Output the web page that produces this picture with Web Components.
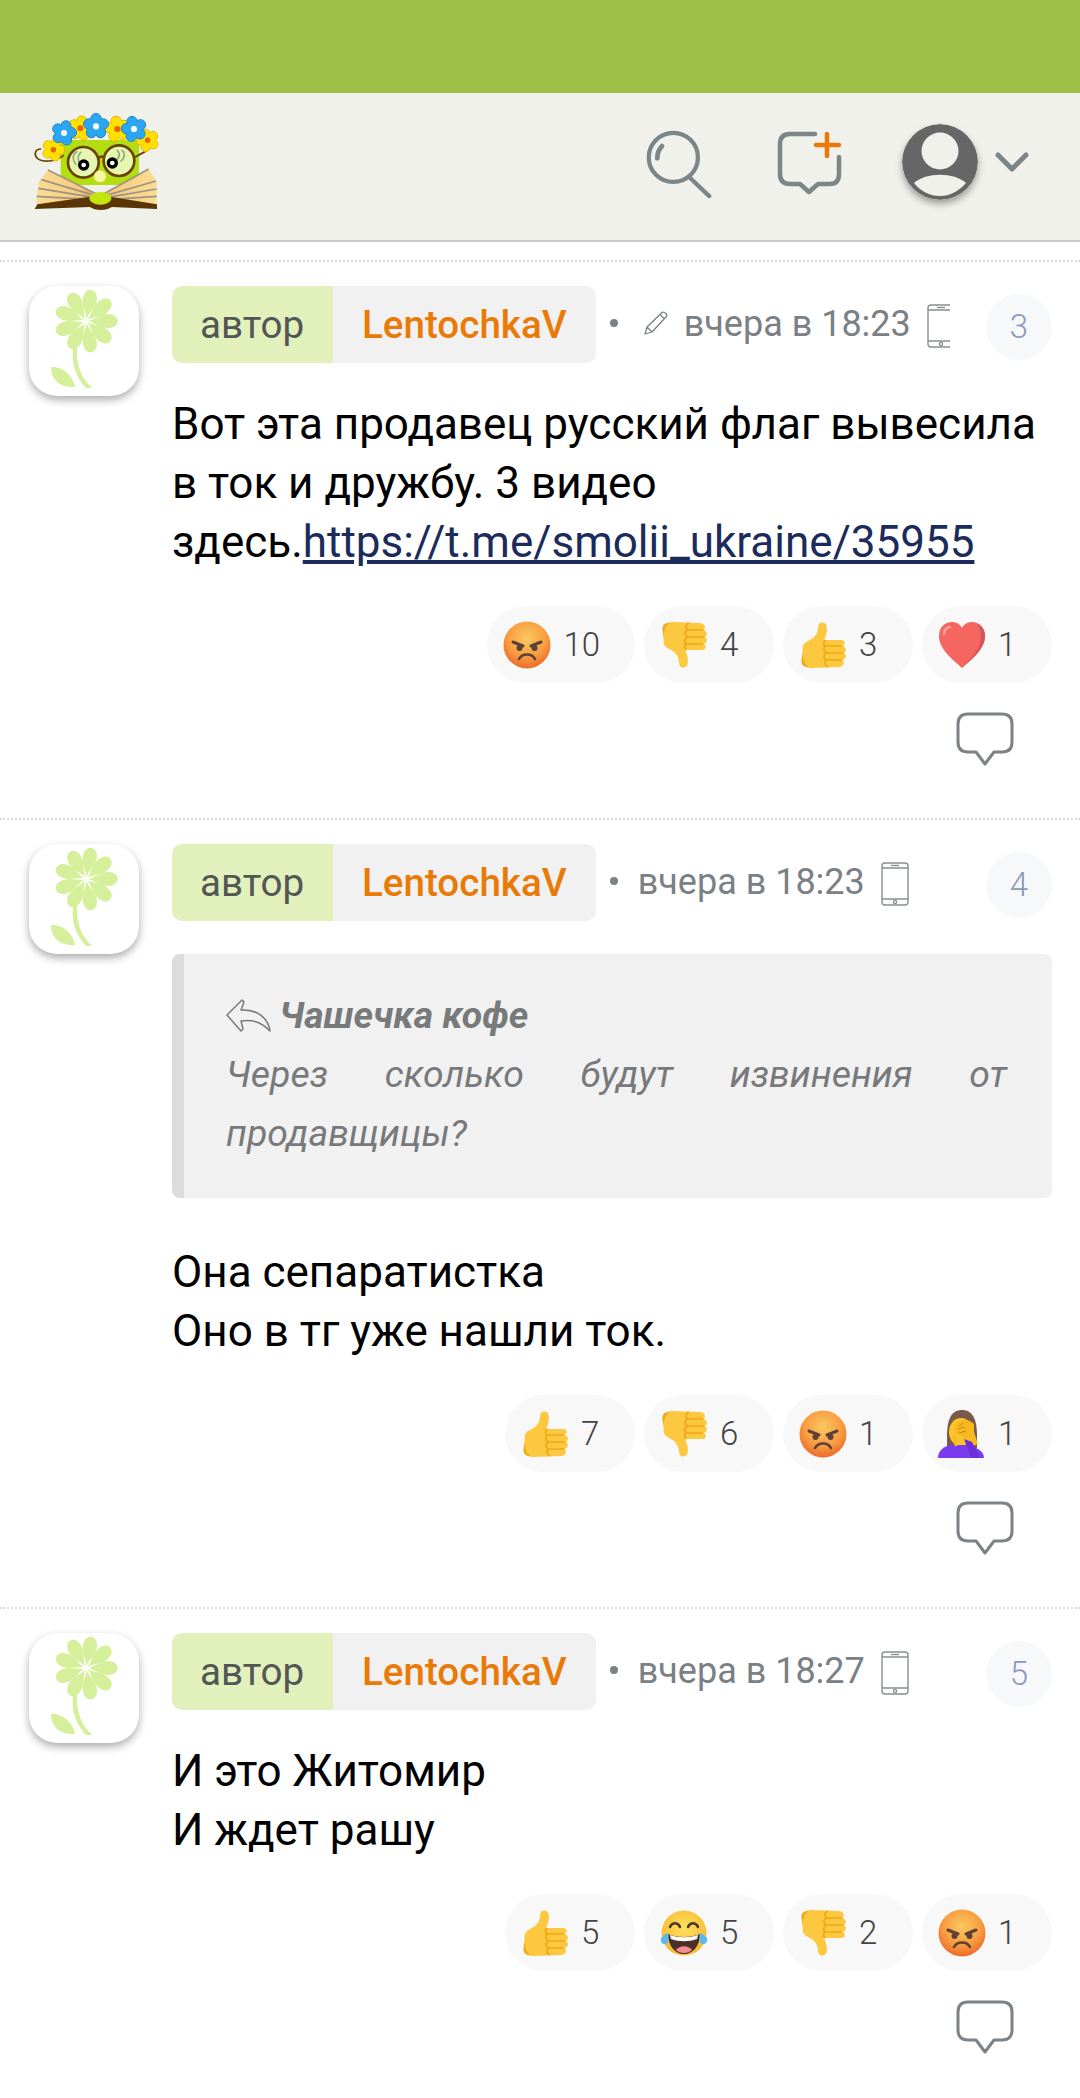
<!DOCTYPE html>
<html lang="ru">
<head>
<meta charset="utf-8">
<title>Forum</title>
<style>
html, body { margin: 0; padding: 0; background: #fff; }
body { font-family: Roboto, "Noto Sans", sans-serif; color: #000; }
a { color: #1b2b5c; text-decoration: underline; }
</style>
</head>
<body>
<top-strip></top-strip>
<site-header></site-header>
<div style="height: 18px"></div>

<forum-comment number="3" time="вчера в 18:23" edited clipped>
  <comment-text>Вот эта продавец русский флаг вывесила в ток и дружбу. 3 видео<br>здесь.<a href="#">https://t.me/smolii_ukraine/35955</a></comment-text>
  <reaction-row slot="reactions">
    <reaction-pill emoji="angry" count="10"></reaction-pill>
    <reaction-pill emoji="down" count="4"></reaction-pill>
    <reaction-pill emoji="up" count="3"></reaction-pill>
    <reaction-pill emoji="heart" count="1"></reaction-pill>
  </reaction-row>
</forum-comment>

<forum-comment number="4" time="вчера в 18:23">
  <quote-block author="Чашечка кофе">Через сколько будут извинения от продавщицы?</quote-block>
  <comment-text style="margin-top: 45px">Она сепаратистка<br>Оно в тг уже нашли ток.</comment-text>
  <reaction-row slot="reactions">
    <reaction-pill emoji="up" count="7"></reaction-pill>
    <reaction-pill emoji="down" count="6"></reaction-pill>
    <reaction-pill emoji="angry" count="1"></reaction-pill>
    <reaction-pill emoji="facepalm" count="1"></reaction-pill>
  </reaction-row>
</forum-comment>

<forum-comment number="5" time="вчера в 18:27">
  <comment-text>И это Житомир<br>И ждет рашу</comment-text>
  <reaction-row slot="reactions">
    <reaction-pill emoji="up" count="5"></reaction-pill>
    <reaction-pill emoji="joy" count="5"></reaction-pill>
    <reaction-pill emoji="down" count="2"></reaction-pill>
    <reaction-pill emoji="angry" count="1"></reaction-pill>
  </reaction-row>
</forum-comment>

<script>
function flower (cx, cy, r, fill, edge, mid, rot) {
  let out = ''
  for (let i = 0; i < 5; i++) {
    const a = (rot + i * 72) * Math.PI / 180
    out += `<circle cx="${cx + Math.sin(a) * r * 0.62}" cy="${cy - Math.cos(a) * r * 0.62}" r="${r * 0.42}" fill="${fill}" stroke="${edge}" stroke-width="3"/>`
  }
  for (let i = 0; i < 5; i++) {
    const a = (rot + i * 72) * Math.PI / 180
    out += `<circle cx="${cx + Math.sin(a) * r * 0.62}" cy="${cy - Math.cos(a) * r * 0.62}" r="${r * 0.38}" fill="${fill}"/>`
  }
  out += `<circle cx="${cx}" cy="${cy}" r="${r * 0.4}" fill="${fill}"/><circle cx="${cx}" cy="${cy}" r="${r * 0.25}" fill="${mid}"/>`
  return out
}

const logoSvg = `
<svg width="150" height="115" viewBox="0 0 450 345">
  <defs>
    <linearGradient id="pg" x1="0" x2="1"><stop offset="0" stop-color="#fbdc92"/><stop offset=".36" stop-color="#f8cb7c"/><stop offset=".5" stop-color="#f59a3c"/><stop offset=".64" stop-color="#f8cb7c"/><stop offset="1" stop-color="#fbdc92"/></linearGradient>
  </defs>
  <path d="M122 105 H358 L356 240 H122 Z" fill="#b4de12"/>
  <path d="M130 152 C105 172 68 172 52 160 C40 148 46 132 62 132" fill="none" stroke="#6a4304" stroke-width="5" stroke-linecap="round"/>
  <path d="M338 160 L375 140" stroke="#6a4304" stroke-width="6"/>
  <circle cx="190" cy="172" r="46" fill="#e6f6ae" stroke="#6a4304" stroke-width="8"/>
  <circle cx="297" cy="167" r="46" fill="#e6f6ae" stroke="#6a4304" stroke-width="8"/>
  <path d="M236 160 Q244 150 252 158" fill="none" stroke="#6a4304" stroke-width="7"/>
  <path d="M168 178 C154 160 160 146 170 140 M180 176 C170 160 174 150 182 142 M290 165 C302 152 298 142 292 136 M303 168 C318 154 314 142 306 136" fill="none" stroke="#93a77e" stroke-width="5" stroke-linecap="round"/>
  <circle cx="191" cy="180" r="17" fill="#000"/><circle cx="191" cy="180" r="7" fill="#fff"/>
  <circle cx="277" cy="174" r="17" fill="#000"/><circle cx="277" cy="174" r="7" fill="#fff"/>
  <circle cx="240" cy="214" r="18" fill="#f8f6a2"/>
  <path d="M48 296 L56 232 L84 195 C130 222 190 245 240 270 C290 245 345 222 386 192 L410 230 L410 296 Z" fill="url(#pg)"/>
  <path d="M84 195 L228 266 M64 224 L226 272 M55 250 L224 278 M50 274 L220 284 M386 192 L252 266 M408 228 L256 272 M410 252 L258 278 M410 274 L262 284" stroke="#9a9489" stroke-width="5" fill="none"/>
  <path d="M44 312 L52 298 L205 276 H275 L411 298 V312 L275 306 C260 318 225 318 210 306 Z" fill="#5a3605"/>
  <ellipse cx="241" cy="280" rx="33" ry="19" fill="#c2e60c"/>
  ${flower(100, 134, 33, '#ffe000', '#e2ad00', '#f06000', 20)}
  ${flower(383, 106, 33, '#ffe000', '#e2ad00', '#f06000', -20)}
  ${flower(181, 70, 36, '#ffe000', '#e2ad00', '#f06000', 10)}
  ${flower(292, 72, 37, '#ffe000', '#e2ad00', '#f06000', -10)}
  ${flower(132, 84, 36, '#2ba7f2', '#1a7ec4', '#fff', 15)}
  ${flower(228, 64, 37, '#2ba7f2', '#1a7ec4', '#fff', 0)}
  ${flower(342, 72, 37, '#2ba7f2', '#1a7ec4', '#fff', -15)}
</svg>`

class TopStrip extends HTMLElement {
  constructor () {
    super()
    this.attachShadow({ mode: 'open' })
    this.shadowRoot.innerHTML = '<style>:host { display: block; height: 93px; background: #9fc047; }</style>'
  }
}

class SiteHeader extends HTMLElement {
  constructor () {
    super()
    this.attachShadow({ mode: 'open' })
    this.shadowRoot.innerHTML = `
<style>
:host { display: flex; align-items: flex-start; height: 147px; background: #f0f1ea; border-bottom: 2px solid #cbcbc7; padding-left: 20px; box-sizing: content-box; }
.logo { margin-top: 12px; display: block; }
.tools { margin-left: auto; display: flex; align-items: flex-start; padding-right: 51px; }
svg { display: block; }
.search { margin-top: 37px; }
.chat { margin-top: 38px; margin-left: 64px; }
.face { margin-top: 31px; margin-left: 59px; width: 76px; height: 76px; border-radius: 50%; box-shadow: 0 4px 7px rgba(0,0,0,.35); }
.chev { margin-top: 58px; margin-left: 17px; }
</style>
<div class="logo">${logoSvg}</div>
<div class="tools">
  <svg class="search" width="68" height="68" viewBox="0 0 72 72" fill="none" stroke="#7c8588" stroke-width="4.5" stroke-linecap="round">
    <circle cx="30" cy="29" r="26"/><path d="M47 50 L68 70"/><path d="M13 30 C13 24 15 20 18 17" stroke-width="5"/>
  </svg>
  <svg class="chat" width="66" height="66" viewBox="0 0 66 66" fill="none" stroke="#7c8588" stroke-width="4.5" stroke-linecap="round" stroke-linejoin="round">
    <path d="M38 3 H13 Q3 3 3 13 V43 Q3 53 13 53 H23 L32 61 L41 53 H53 Q62 53 62 43 V26"/>
    <path d="M50 3 V25 M39 14 H62" stroke="#ea7a08"/>
  </svg>
  <svg class="face" width="76" height="76" viewBox="0 0 76 76">
    <circle cx="38" cy="38" r="38" fill="#666"/>
    <circle cx="38" cy="27" r="18.5" fill="#f0f1ea"/>
    <path d="M12 59 C24 48 52 48 64 59 C55 69 46 72 38 72 C30 72 20 69 12 59 Z" fill="#f0f1ea"/>
  </svg>
  <svg class="chev" width="34" height="22" viewBox="0 0 34 22" fill="none" stroke="#7c8588" stroke-width="5" stroke-linecap="round" stroke-linejoin="round">
    <path d="M3 4 L17 18 L31 4"/>
  </svg>
</div>`
  }
}

const phoneTemplate = `
<svg width="28" height="44" viewBox="0 0 28 44" fill="none" stroke="#8b8f92" stroke-width="1.4">
  <rect x="1" y="1" width="26" height="42" rx="3"/><path d="M1 6 H27 M1 37 H27"/><path d="M10 3.5 H18"/><circle cx="14" cy="40" r="1.6"/>
</svg>`

class ForumComment extends HTMLElement {
  constructor () {
    super()
    this.attachShadow({ mode: 'open' })
    const edited = this.hasAttribute('edited')
    const clipped = this.hasAttribute('clipped')
    this.shadowRoot.innerHTML = `
<style>
:host { display: grid; grid-template-columns: 110px 1fr; column-gap: 33px; padding: 24px 28px 52px 29px; border-top: 2px dotted #dcdcdc; box-sizing: border-box; align-content: start; }
.avatar { width: 110px; height: 110px; border-radius: 28px; background: #fff; box-shadow: 0 4px 8px rgba(0,0,0,.32); }
.avatar svg { display: block; }
.body { min-width: 0; }
.meta { display: flex; align-items: flex-start; height: 77px; }
.badge { display: flex; height: 77px; border-radius: 10px; overflow: hidden; font-size: 38.6px; line-height: 77px; }
.role { background: #e2f0bc; color: #525654; padding: 0 32px 0 28px; width: 101px; text-align: center; }
.name { background: #f1f1f1; color: #ea7a08; font-weight: 500; padding: 0 29px; }
.dot { width: 8px; height: 8px; border-radius: 50%; background: #7a8285; margin: 33px 0 0 14px; }
.pencil { margin: 25px 0 0 26px; }
.time { font-size: 36px; color: #7a8084; line-height: 77px; margin-left: 20px; white-space: nowrap; }
.pencil + .time { margin-left: 16px; }
.phone { margin: 18px 0 0 16px; overflow: hidden; width: ${clipped ? 23 : 28}px; height: 44px; }
.num { width: 66px; height: 66px; border-radius: 50%; background: #f7f8fa; color: #8a9ab8; font-size: 33px; font-weight: 300; line-height: 66px; text-align: center; margin: 8px 0 0 auto; flex: none; }
.actions { display: flex; justify-content: flex-end; padding: 29px 38px 0 0; }
.actions svg { display: block; }
</style>
<div class="avatar">
  <svg width="110" height="110" viewBox="0 0 110 110" fill="#d6ef9a">
    <g transform="translate(57 35)">
      ${[0, 40, 80, 120, 160, 200, 240, 280, 320].map(a => `<path transform="rotate(${a + 10})" d="M0 -2 C-1 -8 -7 -14 -7 -22 C-7 -35 7 -35 7 -22 C7 -14 1 -8 0 -2Z"/>`).join('')}
    </g>
    <path d="M44 62 C42 80 48 92 57 102 H63 C52 92 47 78 48 62 Z"/>
    <path d="M22 81 C34 80 44 90 46 101 C32 102 22 95 22 81Z"/>
  </svg>
</div>
<div class="body">
  <div class="meta">
    <div class="badge"><div class="role">автор</div><div class="name">LentochkaV</div></div>
    <div class="dot"></div>
    ${edited ? `<svg class="pencil" width="24" height="24" viewBox="0 0 24 24" fill="none" stroke="#7a8084" stroke-width="1.3" stroke-linejoin="round"><path d="M1 23 L3 16 L18 1.5 Q20 0.5 22 2.5 Q23.5 4.5 22 6 L8 21 Z M3 16 L8 21 M16 3.5 L20.5 8"/></svg>` : ''}
    <div class="time">${this.getAttribute('time')}</div>
    <div class="phone">${phoneTemplate}</div>
    <div class="num">${this.getAttribute('number')}</div>
  </div>
  <slot></slot>
  <slot name="reactions"></slot>
  <div class="actions">
    <svg width="58" height="54" viewBox="0 0 58 54" fill="none" stroke="#7c8285" stroke-width="3" stroke-linejoin="round">
      <path d="M12 2 H46 Q56 2 56 12 V30 Q56 40 46 40 H38 L29 52 L20 40 H12 Q2 40 2 30 V12 Q2 2 12 2 Z"/>
    </svg>
  </div>
</div>`
  }
}

class CommentText extends HTMLElement {
  constructor () {
    super()
    this.attachShadow({ mode: 'open' })
    this.shadowRoot.innerHTML = `
<style>:host { display: block; font-size: 44px; line-height: 59px; color: #000; margin-top: 32px; }</style>
<slot></slot>`
  }
}

class QuoteBlock extends HTMLElement {
  constructor () {
    super()
    this.attachShadow({ mode: 'open' })
    this.shadowRoot.innerHTML = `
<style>
:host { display: block; margin-top: 33px; background: #f1f1f1; border-left: 12px solid #dcdcdc; border-radius: 8px; padding: 32px 45px 35px 42px; font-size: 37.4px; line-height: 59px; font-style: italic; color: #77797b; }
.head { display: flex; align-items: center; gap: 8px; }
b { font-weight: 700; }
svg { display: block; flex: none; }
.txt { text-align: justify; }
</style>
<div class="head">
  <svg width="45" height="33" viewBox="0 0 45 33" fill="none" stroke="#77797b" stroke-width="1.5" stroke-linejoin="round">
    <path d="M1 16 L16 1 L18 3 L15 11 C30 10 42 18 44 32 C36 24 28 20 15 22 L17 30 L15 32 Z"/>
  </svg>
  <b>${this.getAttribute('author')}</b>
</div>
<div class="txt"><slot></slot></div>`
  }
}

class ReactionRow extends HTMLElement {
  constructor () {
    super()
    this.attachShadow({ mode: 'open' })
    this.shadowRoot.innerHTML = `
<style>:host { display: flex; justify-content: flex-end; gap: 9px; margin-top: 34px; }</style>
<slot></slot>`
  }
}

const thumb = `<g transform="translate(-6 0) scale(1.2 1)"><path d="M8 27 C8 23 11 21 14 19 C19 16 21 11 21 5 C21 1 27 0 28 5 C29 11 27 15 26 19 L40 19 C44 19 44 24 41 25 C45 26 45 31 42 32 C45 33 45 38 41 39 C44 41 42 46 38 46 L16 47 C11 47 8 45 8 41 Z" fill="#fcc840"/>
<path d="M27 25 H41 M28 32 H42 M28 39 H41 M27 19 C25 21 25 24 27 25 C25 27 25 30 28 32 C25 34 25 37 28 39 C26 41 26 44 29 46" fill="none" stroke="#f0a818" stroke-width="1.6"/>
<path d="M8 30 C8 38 9 43 13 46 C9 46 7 44 7 40 Z" fill="#f0a818"/></g>`

const emojis = {
  angry: `<defs><radialGradient id="ag" cx=".5" cy=".36" r=".64"><stop offset="0" stop-color="#f9c860"/><stop offset=".6" stop-color="#f99f42"/><stop offset="1" stop-color="#ee6a2c"/></radialGradient></defs>
    <ellipse cx="24" cy="24" rx="23.5" ry="23.5" fill="url(#ag)"/>
    <path d="M10 21 L20 25 M38 21 L28 25" stroke="#5d4037" stroke-width="3" stroke-linecap="round"/>
    <circle cx="16.5" cy="27" r="3" fill="#5d4037"/><circle cx="31.5" cy="27" r="3" fill="#5d4037"/>
    <path d="M16 38 C19 32 29 32 32 38" fill="none" stroke="#5d4037" stroke-width="2.6" stroke-linecap="round"/>`,
  up: thumb,
  down: `<g transform="matrix(1 0 0 -1 0 48)">${thumb}</g>`,
  heart: `<path d="M24 47 C14 38 1 28 1 15 C1 6 7 1 14 1 C18 1 22 3 24 7 C26 3 30 1 34 1 C41 1 47 6 47 15 C47 28 34 38 24 47 Z" fill="#f4665f"/>
    <path d="M47 15 C47 28 34 38 24 47 C34 36 43 28 43 15 C43 10 42 6 39 3 C44 5 47 9 47 15 Z" fill="#d2565a"/>
    <path d="M6 13 C6 9 9 6 12 6" fill="none" stroke="#f9a5a0" stroke-width="2.5" stroke-linecap="round"/>`,
  joy: `<defs><radialGradient id="jg" cx=".5" cy=".4" r=".65"><stop offset="0" stop-color="#fde15e"/><stop offset="1" stop-color="#f7b52e"/></radialGradient></defs>
    <circle cx="24" cy="24" r="22.5" fill="url(#jg)"/>
    <path d="M10 18 C12 13 18 13 20 18 M28 18 C30 13 36 13 38 18" fill="none" stroke="#4f3a2a" stroke-width="2.6" stroke-linecap="round"/>
    <path d="M8 25 C16 29 32 29 40 25 C40 37 33 45 24 45 C15 45 8 37 8 25 Z" fill="#4a3126"/>
    <path d="M10 26 C18 29 30 29 38 26 L37 30 C29 33 19 33 11 30 Z" fill="#fff"/>
    <path d="M16 41 C20 36 28 36 32 41 C28 45 20 45 16 41 Z" fill="#f28b92"/>
    <path d="M1 29 C3 26 6 25 8 24 C9 29 9 33 6 35 C3 36 0 33 1 29 Z M47 29 C45 26 42 25 40 24 C39 29 39 33 42 35 C45 36 48 33 47 29 Z" fill="#5cb8ee"/>`,
  facepalm: `<path d="M9 26 C9 8 14 0 24 0 C34 0 39 8 39 26 L39 38 L9 38 Z" fill="#7b5a4c"/>
    <ellipse cx="23" cy="22" rx="12" ry="14" fill="#fcc528"/>
    <path d="M0 48 C0 40 6 36 14 35 L28 35 C36 36 46 40 46 48 Z" fill="#7a3bef"/>
    <path d="M18 13 C24 8 32 10 36 14 L36 22 L40 34 L30 38 L27 28 L17 22 Z" fill="#f8b822"/>
    <path d="M21 16 L25 13 M20 19 L27 17 M21 23 L28 21" stroke="#c98a12" stroke-width="1"/>
    <path d="M26 29 L33 48 H42 L34 32 Z" fill="#6a2fd8"/>
    <path d="M15 26 C18 28 18 34 18 36" stroke="#f8b822" stroke-width="3" fill="none"/>`
}

class ReactionPill extends HTMLElement {
  constructor () {
    super()
    this.attachShadow({ mode: 'open' })
    this.shadowRoot.innerHTML = `
<style>
:host { display: flex; align-items: center; height: 77px; min-width: 130px; box-sizing: border-box; padding: 0 35px 0 16px; gap: 12px; background: #f8f8f8; border-radius: 38px; font-size: 33px; font-weight: 300; color: #444; }
svg { display: block; flex: none; }
</style>
<svg width="48" height="48" viewBox="0 0 48 48">${emojis[this.getAttribute('emoji')]}</svg>
<span>${this.getAttribute('count')}</span>`
  }
}

customElements.define('top-strip', TopStrip)
customElements.define('site-header', SiteHeader)
customElements.define('forum-comment', ForumComment)
customElements.define('comment-text', CommentText)
customElements.define('quote-block', QuoteBlock)
customElements.define('reaction-row', ReactionRow)
customElements.define('reaction-pill', ReactionPill)
</script>
</body>
</html>
